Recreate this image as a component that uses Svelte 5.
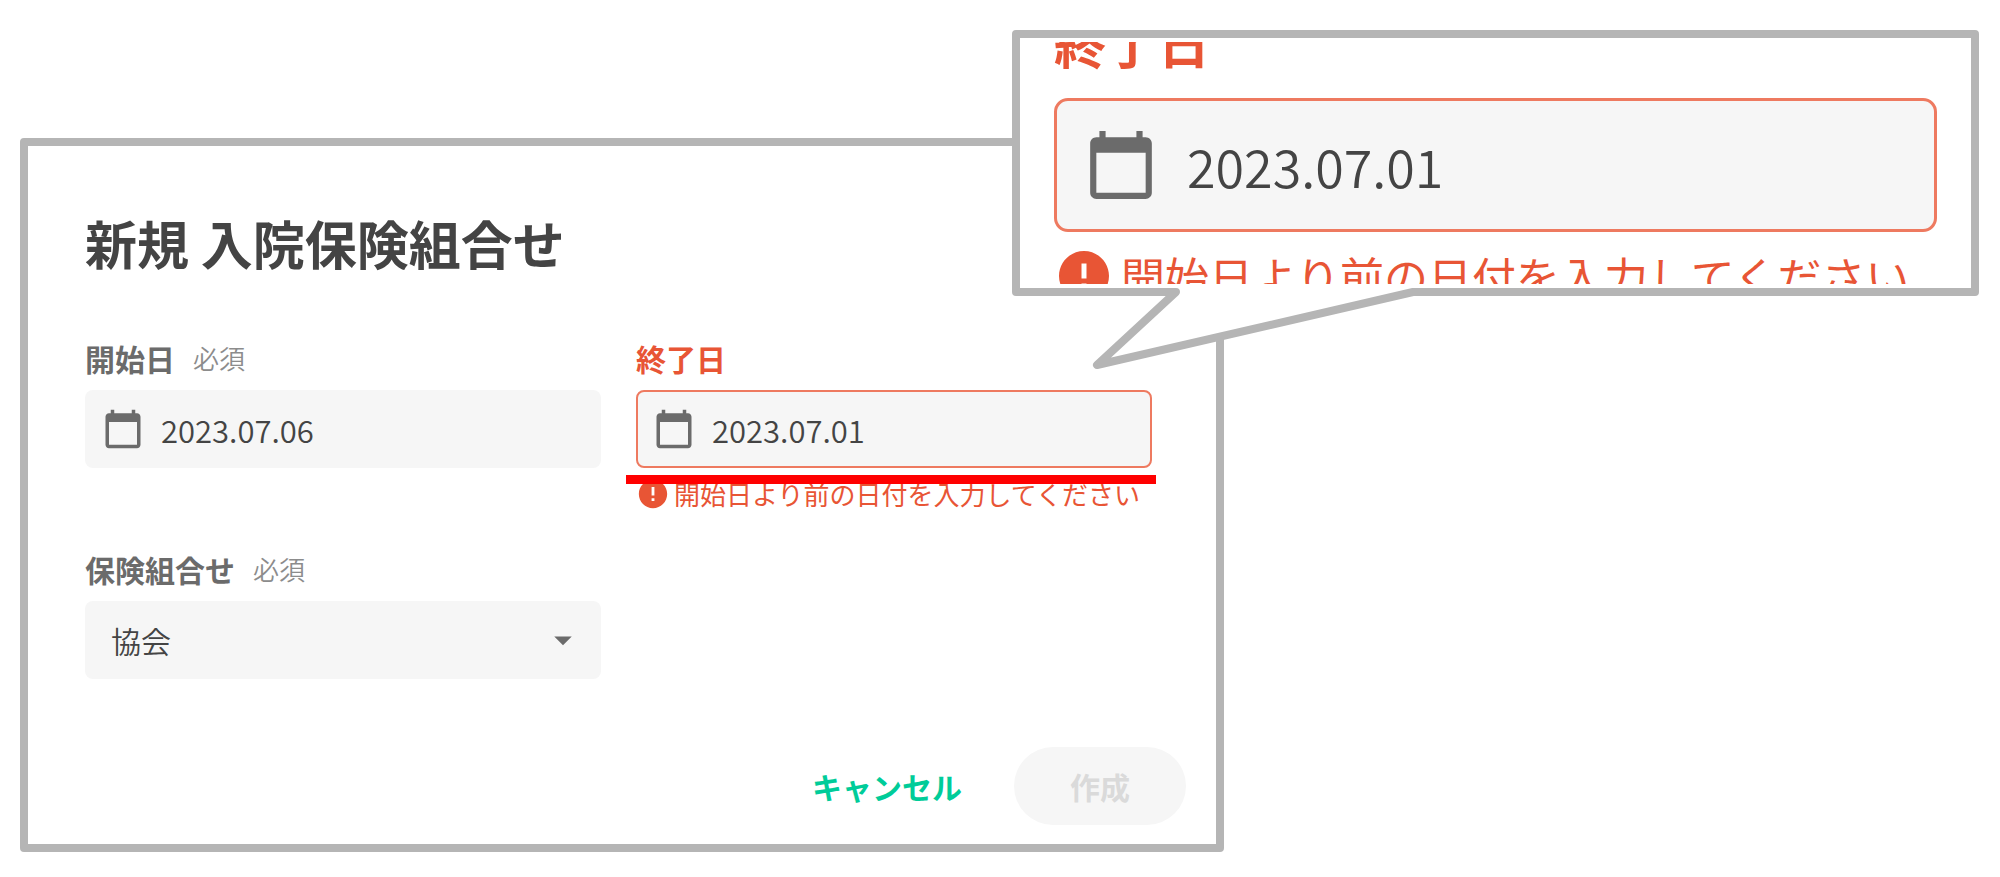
<script lang="ts">
let startDate = $state('2023.07.06')
let endDate = $state('2023.07.01')
let insurance = $state('協会')

const errorText = '開始日より前の日付を入力してください'
</script>

{#snippet calendarIcon()}
    <svg class="icon" viewBox="0 0 24 24" aria-hidden="true">
        <path d="M20 3h-1V1h-2v2H7V1H5v2H4c-1.1 0-2 .9-2 2v16c0 1.1.9 2 2 2h16c1.1 0 2-.9 2-2V5c0-1.1-.9-2-2-2zm0 18H4V8h16v13z" />
    </svg>
{/snippet}

{#snippet endDateField(id: string)}
    <div class="field invalid">
        <div class="caption">
            <label for={id}>終了日</label>
        </div>
        <div class="control">
            {@render calendarIcon()}
            <input {id} type="text" bind:value={endDate} aria-invalid="true" aria-describedby="{id}-error">
        </div>
        <p class="error" id="{id}-error">
            <svg class="error-icon" viewBox="0 0 24 24" aria-hidden="true">
                <path d="M12 2C6.48 2 2 6.48 2 12s4.48 10 10 10 10-4.48 10-10S17.52 2 12 2zm1 15h-2v-2h2v2zm0-4h-2V7h2v6z" />
            </svg>
            <span>{errorText}</span>
        </p>
    </div>
{/snippet}

<main>
    <form class="dialog">
        <h1>新規 入院保険組合せ</h1>

        <div class="fields">
            <div class="field">
                <div class="caption">
                    <label for="start">開始日</label>
                    <span class="required">必須</span>
                </div>
                <div class="control">
                    {@render calendarIcon()}
                    <input id="start" type="text" bind:value={startDate}>
                </div>
            </div>

            <div class="marked">
                {@render endDateField('end')}
            </div>

            <div class="field">
                <div class="caption">
                    <label for="insurance">保険組合せ</label>
                    <span class="required">必須</span>
                </div>
                <div class="control select">
                    <select id="insurance" bind:value={insurance}>
                        <option>協会</option>
                    </select>
                    <svg class="icon" viewBox="0 0 24 24" aria-hidden="true">
                        <path d="M7 10l5 5 5-5z" />
                    </svg>
                </div>
            </div>
        </div>

        <div class="actions">
            <button type="button" class="cancel">キャンセル</button>
            <button type="submit" class="create" disabled>作成</button>
        </div>
    </form>

    <!-- enlarged view of the end date field -->
    <aside class="callout">
        <div class="lens">
            {@render endDateField('end-zoom')}
        </div>
        <svg class="tail" viewBox="0 0 330 90" aria-hidden="true">
            <path class="cover" d="M87 4L8 77L324 4V0H87z" />
            <path class="line" d="M82 4H87L8 77L324 4H330" />
        </svg>
    </aside>
</main>

<style>
    :global(body) {
        margin: 0;
        background: #fff;
    }

    main {
        --text: 30px;
        --text-line: 44px;
        --value: 31px;
        --note: 26px;
        --note-line: 32px;
        --caption-gap: 10px;
        --error-gap: 10px;
        --control: 78px;
        --icon: 42px;
        --icon-gap: 17px;
        --inset: 17px;
        --error-icon: 34px;
        --error-icon-gap: 4px;
        --border: 2px;
        --radius: 8px;
        --red: #e85535;
        --frame: #b5b5b5;
        position: relative;
        display: flow-root;
        font-family: "Noto Sans CJK JP", sans-serif;
        color: #444;
    }

    .dialog {
        margin: 138px calc(40% - 24px) 24px 20px;
        padding: 67px 0 19px;
        border: 8px solid var(--frame);
        border-radius: 4px;
        background: #fff;
    }

    h1 {
        margin: 0 57px 63px;
        font-size: 52px;
        font-weight: 700;
        line-height: 60px;
    }

    .fields {
        display: grid;
        grid-template-columns: 1fr 1fr;
        gap: 37px 35px;
        margin: 0 64px 0 57px;
    }

    .caption {
        display: flex;
        align-items: center;
        gap: 18px;
        margin-bottom: var(--caption-gap);
        line-height: var(--text-line);
        white-space: nowrap;
    }

    label {
        font-size: var(--text);
        font-weight: 700;
        color: #6b6b6b;
    }

    .required {
        font-size: var(--note);
        font-weight: 350;
        color: #8c8c8c;
    }

    .control {
        display: flex;
        align-items: center;
        gap: var(--icon-gap);
        box-sizing: border-box;
        height: var(--control);
        padding: 0 var(--inset);
        border-radius: var(--radius);
        background: #f6f6f6;
    }

    .icon {
        flex: none;
        width: var(--icon);
        height: var(--icon);
        fill: #6b6b6b;
    }

    input,
    select {
        flex: 1;
        min-width: 0;
        height: 100%;
        padding: 0;
        border: 0;
        outline: 0;
        background: none;
        color: #444;
        font-family: inherit;
        font-size: var(--value);
        font-weight: 350;
        appearance: none;
    }

    .select {
        position: relative;
        padding: 0;
    }

    .select select {
        padding: 0 60px 0 26px;
        font-size: var(--text);
    }

    .select .icon {
        position: absolute;
        right: 17px;
        pointer-events: none;
    }

    .invalid label {
        color: var(--red);
    }

    .invalid .control {
        padding: 0 calc(var(--inset) - var(--border));
        border: var(--border) solid #ee7a60;
    }

    .error {
        display: flex;
        align-items: center;
        gap: var(--error-icon-gap);
        margin: var(--error-gap) 0 0;
        font-size: var(--note);
        line-height: var(--note-line);
        white-space: nowrap;
        color: var(--red);
    }

    .error-icon {
        flex: none;
        width: var(--error-icon);
        height: var(--error-icon);
        margin: -1px 0;
        fill: var(--red);
    }

    .marked .error {
        position: relative;
    }

    /* red marker line over the message */
    .marked .error::before {
        content: "";
        position: absolute;
        top: -3px;
        left: -10px;
        right: -4px;
        height: 9px;
        background: #f00;
    }

    .actions {
        display: flex;
        justify-content: flex-end;
        gap: 16px;
        margin: 68px 30px 0 58px;
    }

    button {
        height: 78px;
        padding: 0 36px;
        border: 0;
        border-radius: 39px;
        background: none;
        font-family: inherit;
        font-size: 30px;
        font-weight: 700;
    }

    .cancel {
        color: #0c9;
        cursor: pointer;
    }

    .create {
        padding: 0 56px;
        background: #f6f6f6;
        color: #dadada;
    }

    .callout {
        --text: 52px;
        --text-line: 76px;
        --value: 52px;
        --note: 44px;
        --note-line: 56px;
        --caption-gap: 18px;
        --error-gap: 16px;
        --control: 134px;
        --icon: 74px;
        --icon-gap: 29px;
        --inset: 30px;
        --error-icon: 60px;
        --error-icon-gap: 7px;
        --border: 3px;
        --radius: 14px;
        position: absolute;
        top: 30px;
        left: calc(50% + 12px);
        right: 21px;
        padding: 4px;
        border: 8px solid var(--frame);
        border-radius: 4px;
        background: #fff;
    }

    .lens {
        height: 242px;
        padding: 0 30px;
        overflow: hidden;
    }

    .lens .field {
        margin-top: -38px;
    }

    .callout .error-icon {
        margin: -2px 0;
    }

    .tail {
        position: absolute;
        top: 100%;
        left: 69px;
        width: 330px;
        height: 90px;
    }

    .cover {
        fill: #fff;
    }

    .line {
        fill: none;
        stroke: var(--frame);
        stroke-width: 8px;
        stroke-linejoin: round;
    }
</style>
